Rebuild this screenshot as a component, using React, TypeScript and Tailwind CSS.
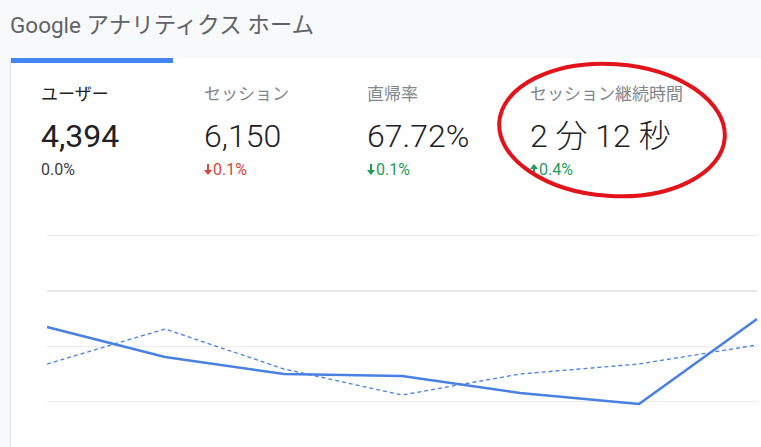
import React from 'react';

type Metric = {
  label: string;
  value: string;
  change: string;
  trend: 'none' | 'down-bad' | 'down-good' | 'up-good';
  active?: boolean;
};

const metrics: Metric[] = [
  { label: 'ユーザー', value: '4,394', change: '0.0%', trend: 'none', active: true },
  { label: 'セッション', value: '6,150', change: '0.1%', trend: 'down-bad' },
  { label: '直帰率', value: '67.72%', change: '0.1%', trend: 'down-good' },
  { label: 'セッション継続時間', value: '2 分 12 秒', change: '0.4%', trend: 'up-good' },
];

const Arrow = ({ up, color }: { up?: boolean; color: string }) => (
  <svg width="8" height="11" viewBox="0 0 8 11" className="mr-[1px]">
    <g fill={color} transform={up ? 'rotate(180 4 5.5)' : undefined}>
      <rect x="3" y="0" width="2" height="7" />
      <path d="M0 6 L8 6 L4 11 Z" />
    </g>
  </svg>
);

const MetricCell = ({ m }: { m: Metric }) => {
  const color =
    m.trend === 'down-bad' ? 'text-[#d9453b]' : m.trend === 'none' ? 'text-[#3c4043]' : 'text-[#1e9a5a]';
  return (
    <div className="w-[163px] shrink-0">
      <div className={`text-[17px] leading-[22px] ${m.active ? 'text-[#202124]' : 'text-[#80868b]'}`}>
        {m.label}
      </div>
      <div
        className={`mt-[13px] text-[32px] leading-[36px] ${
          m.active ? 'text-[#202124] font-normal' : 'text-[#202124] font-light'
        }`}
      >
        {m.value}
      </div>
      <div className={`mt-[6px] flex items-center text-[16px] leading-[19px] ${color}`}>
        {m.trend === 'down-bad' && <Arrow color="#d9453b" />}
        {m.trend === 'down-good' && <Arrow color="#1e9a5a" />}
        {m.trend === 'up-good' && <Arrow up color="#1e9a5a" />}
        <span>{m.change}</span>
      </div>
    </div>
  );
};

const xs = [47, 165, 284, 402, 520, 639, 757];
const solid = [327, 357, 374, 376, 393, 404, 319];
const dashed = [364, 329, 369, 395, 374, 364, 345];
const pts = (ys: number[]) => ys.map((y, i) => `${xs[i]},${y}`).join(' ');

export default function App() {
  return (
    <div className="relative w-[761px] h-[447px] overflow-hidden bg-[#f8f9fa] font-['Roboto','Noto_Sans_CJK_JP',sans-serif]">
      <h1 className="pl-[10px] pt-[10px] text-[22.5px] leading-[30px] text-[#5f6368]">
        Google アナリティクス ホーム
      </h1>
      <div className="mt-[18px] ml-[10px] h-[400px] bg-white border-l border-[#e3e4e6]">
        <div className="w-[162px] h-[5px] bg-[#4285f4]" />
        <div className="flex pl-[30px] pt-[20px]">
          {metrics.map((m) => (
            <MetricCell key={m.label} m={m} />
          ))}
        </div>
        <svg width="750" height="222" viewBox="11 225 750 222" className="mt-[46px] block">
          <line x1="47" y1="235.5" x2="757" y2="235.5" stroke="#ececec" strokeWidth="1" />
          <line x1="47" y1="291" x2="757" y2="291" stroke="#e6e6e6" strokeWidth="2" />
          <line x1="47" y1="346.5" x2="757" y2="346.5" stroke="#ececec" strokeWidth="1" />
          <line x1="47" y1="401.5" x2="757" y2="401.5" stroke="#ececec" strokeWidth="1" />
          <polyline points={pts(dashed)} fill="none" stroke="#4a80e0" strokeWidth="1.3" strokeDasharray="4 3" />
          <polyline points={pts(solid)} fill="none" stroke="#4a80e0" strokeWidth="2.6" strokeLinejoin="round" />
        </svg>
      </div>
      <svg className="absolute left-0 top-0 pointer-events-none" width="761" height="447">
        <ellipse cx="612" cy="130" rx="113" ry="66" fill="none" stroke="#e2131b" strokeWidth="4" transform="rotate(4 612 130)" />
      </svg>
    </div>
  );
}
